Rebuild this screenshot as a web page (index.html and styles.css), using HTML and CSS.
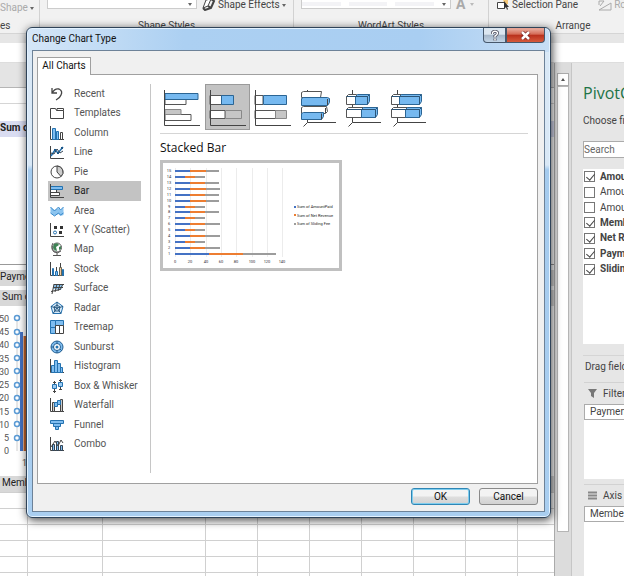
FILE: index.html
```html
<!DOCTYPE html>
<html lang="en">
<head>
  <meta charset="UTF-8" />
  <meta name="viewport" content="width=device-width, initial-scale=1.0"/>
  <title>Change Chart Type</title>
  <link rel="stylesheet" href="styles.css">
</head>
<body>
  <div class="app">
    <div class="ribbon">
      <div class="group group-insert">
        <div class="tools"><span class="dim">Shape <i class="caret"></i></span></div>
        <div class="group-name">es</div>
      </div>
      <div class="group group-shape">
        <div class="tools">
          <div class="gallery"><i class="caret"></i></div>
          <button class="tool">
            <svg width="14" height="12" viewBox="0 0 14 12"><path d="M4 1 9 0 6 7 1 9Z" fill="#fff" stroke="#444"/><path d="M1 9 3 11 9 9 12 2 9 0M6 7 9 9" fill="none" stroke="#444" stroke-width="2"/></svg>
            Shape Effects <i class="caret"></i>
          </button>
        </div>
        <div class="group-name">Shape Styles</div>
      </div>
      <div class="group group-wordart">
        <div class="tools">
          <div class="gallery wordart"><span></span><span></span><span></span><i class="caret"></i></div>
          <span class="dim letter">A</span><i class="caret light"></i>
        </div>
        <div class="group-name">WordArt Styles</div>
      </div>
      <div class="group group-arrange">
        <div class="tools">
          <button class="tool">
            <svg width="14" height="12" viewBox="0 0 14 12"><path d="M7 0h5v5H8z" fill="#f3c677"/><path d="M1.500 3.500h7v6h-7z" fill="#fff" stroke="#444"/><path d="M8 2v8l2-2 1 3 1-1-1-2h2z" fill="#333"/></svg>
            Selection Pane
          </button>
          <span class="dim rotate">
            <svg width="14" height="11" viewBox="0 0 14 11"><path d="M1 10h12V3zM1 5V1h5M6 1 2 6" fill="none" stroke="#aaa"/></svg>
            Ro
          </span>
        </div>
        <div class="group-name">Arrange</div>
      </div>
    </div>
    <div class="formula-bar"></div>

    <div class="workspace">
      <div class="sheet">
        <div class="sheet-head"></div>
        <div class="sheet-row"></div>
        <div class="band pivot">Sum o</div>
        <div class="sheet-blank"></div>
        <div class="band">Paymen</div>
        <div class="band second">Sum o</div>
        <svg class="axis" width="40" height="165" viewBox="0 0 40 165">
          <path d="M17 11v133" stroke="#d0d0d0"/>
          <path d="M21.500 25v119" stroke="#4472c4" stroke-width="3"/>
          <path d="M25 29v115" stroke="#c0622a" stroke-width="3"/>
          <g class="axis-text">
            <text x="9" y="15">50</text><text x="9" y="28">45</text><text x="9" y="41">40</text><text x="9" y="55">35</text><text x="9" y="68">30</text><text x="9" y="81">25</text><text x="9" y="94">20</text><text x="9" y="108">15</text><text x="9" y="121">10</text><text x="9" y="134">5</text><text x="9" y="147">0</text><text x="27" y="159">1</text>
          </g>
          <g fill="#fff" stroke="#5b9bd5" stroke-width="1.500">
            <circle cx="17" cy="11" r="2.500"/><circle cx="17" cy="25" r="2.500"/><circle cx="17" cy="38" r="2.500"/><circle cx="17" cy="51" r="2.500"/><circle cx="17" cy="64" r="2.500"/><circle cx="17" cy="78" r="2.500"/><circle cx="17" cy="91" r="2.500"/><circle cx="17" cy="104" r="2.500"/><circle cx="17" cy="117" r="2.500"/><circle cx="17" cy="131" r="2.500"/>
          </g>
        </svg>
        <div class="band second">Membe</div>
        <div class="cells"><span></span><span></span><span></span><span></span><span></span><span></span><span></span><span></span><span></span></div>
      </div>
      <div class="scrollbar"><div class="scroll-up"><i class="caret up"></i></div><div class="thumb"></div></div>
      <div class="pane">
        <h2>PivotC</h2>
        <p>Choose fi</p>
        <input class="search" type="text" placeholder="Search" aria-label="Search" />
        <div class="fields">
          <label class="on"><input type="checkbox" checked />Amou</label>
          <label><input type="checkbox" />Amou</label>
          <label><input type="checkbox" />Amou</label>
          <label class="on"><input type="checkbox" checked />Memb</label>
          <label class="on"><input type="checkbox" checked />Net R</label>
          <label class="on"><input type="checkbox" checked />Paym</label>
          <label class="on"><input type="checkbox" checked />Slidin</label>
        </div>
        <p class="drag">Drag field</p>
        <div class="area">
          <div class="area-name"><svg width="9" height="9" viewBox="0 0 9 9"><path d="M0 0h9L6 4v5L3 7V4z" fill="#777"/></svg>Filter</div>
          <div class="area-box"><div class="chip">Paymen</div></div>
        </div>
        <div class="area">
          <div class="area-name"><svg width="9" height="9" viewBox="0 0 9 9"><path d="M0 1.500h9M0 4.500h9M0 7.500h9" stroke="#888" stroke-width="2"/></svg>Axis</div>
          <div class="area-box"><div class="chip">Membe</div></div>
        </div>
      </div>
    </div>
  </div>

  <div class="dialog" role="dialog" aria-labelledby="dialog-title">
    <div class="titlebar">
      <span id="dialog-title">Change Chart Type</span>
      <div class="window-btns">
        <button class="help" aria-label="Help"><svg width="10" height="11" viewBox="0 0 10 11"><path d="M2.500 4V2.500Q5 0 7.500 2.500 8 4 5 6v1.500M5 8.500v2" fill="none" stroke="#445" stroke-width="3"/><path d="M2.500 4V2.500Q5 0 7.500 2.500 8 4 5 6v1.500M5 8.500v2" fill="none" stroke="#fff" stroke-width="1.500"/></svg></button>
        <button class="close" aria-label="Close"><svg width="11" height="9" viewBox="0 0 11 9"><path d="m2 1 7 7M9 1 2 8" stroke="#722" stroke-width="4"/><path d="m2 1 7 7M9 1 2 8" stroke="#fff" stroke-width="2.500"/></svg></button>
      </div>
    </div>
    <div class="dialog-body">
      <div class="tabs"><button class="tab">All Charts</button></div>
      <div class="panel">
        <div class="types">
          <button><svg class="ico" viewBox="0 0 14 14"><path d="M2 1v5h5M2 6Q5 1 9 2q4 2 2 6-1 3-5 5" fill="none" stroke="#444" stroke-width="1.300"/></svg>Recent</button>
          <button><svg class="ico" viewBox="0 0 14 14"><path d="M.5 12.500v-10h5l1 2h7v8zM7 4.500V2.500h6.500v2" fill="#fff" stroke="#444"/></svg>Templates</button>
          <button><svg class="ico" viewBox="0 0 14 14"><path d="M.5 0v13.500H14" fill="none" stroke="#444"/><path d="M2.500 2.500h3v11h-3zM6.500 5.500h2v8h-2z" fill="#7fbdf0" stroke="#2472b0"/><path d="M10.500 6.500h2v7h-2z" fill="#fff" stroke="#444"/></svg>Column</button>
          <button><svg class="ico" viewBox="0 0 14 14"><path d="M.5 1v12.500H14" fill="none" stroke="#444"/><path d="m1 11 4-6 3 3 5-6" fill="none" stroke="#2472b0" stroke-width="1.500"/><path d="m1 8 3 1 3-5 3 4 3-2" fill="none" stroke="#345"/><path d="M4 4h2v2H4zM7 7h2v2H7zM11 2h2v2h-2z" fill="#1b5687"/></svg>Line</button>
          <button><svg class="ico" viewBox="0 0 14 14"><circle cx="7" cy="7" r="6" fill="#fff" stroke="#444"/><path d="M7 7V1a6 6 0 0 1 4 10.500z" fill="#ccc" stroke="#444"/></svg>Pie</button>
          <button class="selected"><svg class="ico" viewBox="0 0 14 14"><path d="M.5 5.500h6v3h-6zM.5 8.500h9v3h-9z" fill="#fff" stroke="#444"/><path d="M.5 2.500h12v3H.5z" fill="#7fbdf0" stroke="#2472b0"/><path d="M.5 0v13.500H14" fill="none" stroke="#444"/></svg>Bar</button>
          <button><svg class="ico" viewBox="0 0 14 14"><path d="m.5 3 4 3 4-2 2 2 3-3v8l-3 1-2-2-4 2-4-3z" fill="#8cc4ef"/><path d="m.5 3 4 4 4-4 2 3 3-3M.5 9l4 3 4-3 2 2 3-2" fill="none" stroke="#3a8acb"/></svg>Area</button>
          <button><svg class="ico" viewBox="0 0 14 14"><path d="M.5 0v13.500H14" fill="none" stroke="#444"/><path d="M4 3h3v3H4zM10 3h3v3h-3zM9 8h3v3H9z" fill="#333"/><circle cx="5" cy="9.500" r="1.500" fill="#fff" stroke="#2472b0"/></svg>X Y (Scatter)</button>
          <button><svg class="ico" viewBox="0 0 14 14"><circle cx="7" cy="5.500" r="4.500" fill="#fff" stroke="#555"/><path d="M4 2q4-2 5 1l-3 2 1 4q-4-1-4-4zM9 5l2-1v3L9 8z" fill="#3f8355"/><path d="M3 1q-3 5 1 9 4 2 7-1M7 11v2.500M3 13.500h8" fill="none" stroke="#555"/></svg>Map</button>
          <button><svg class="ico" viewBox="0 0 14 14"><path d="M.5 0v13.500H14M6.500 5v8M10.500 1v6" fill="none" stroke="#444"/><path d="M2.500 6.500h1v7h-1zM5.500 9.500h2v4h-2zM12.500 7.500h1v6h-1z" fill="#7fbdf0" stroke="#2472b0"/><path d="M9.500 5.500h2v8h-2z" fill="#f3c99f" stroke="#665"/></svg>Stock</button>
          <button><svg class="ico" viewBox="0 0 14 14"><path d="m4 3 9 1-2 5-8-1z" fill="#8cc4ef"/><path d="M4 3 2 13M7 3l-2 8M10 3 8 10M13 3l-3 6M4 3.500h10M3 6.500h10M1 10.500l9-2" fill="none" stroke="#444"/></svg>Surface</button>
          <button><svg class="ico" viewBox="0 0 14 14"><path d="m7 1 6 4.500-2 7H3l-2-7z" fill="#dbedfb" stroke="#2472b0"/><path d="m7 4 3 2-1 4H5L4 6zM7 1v6M13 5.500 7 7l4 5.500M3 12.500 7 7 1 5.500" fill="none" stroke="#24567f"/></svg>Radar</button>
          <button><svg class="ico" viewBox="0 0 14 14"><path d="M.5.500h5v7h-5zM.5 7.500h5v6h-5z" fill="#7fbdf0" stroke="#2472b0"/><path d="M5.500.500h8v5h-8z" fill="#7fbdf0" stroke="#2472b0"/><path d="M5.500 5.500h4v8h-4zM9.500 5.500h4v8h-4z" fill="#fff" stroke="#444"/></svg>Treemap</button>
          <button><svg class="ico" viewBox="0 0 14 14"><circle cx="7" cy="7" r="6" fill="#7fbdf0" stroke="#245f91"/><circle cx="7" cy="7" r="3.500" fill="#fff" stroke="#245f91"/><circle cx="7" cy="7" r="1.500" fill="#2472b0"/><path d="M7 1v3M10 9l2 2M1 7h3M7 10v3" stroke="#245f91"/></svg>Sunburst</button>
          <button><svg class="ico" viewBox="0 0 14 14"><path d="M.5 0v13.500H14" fill="none" stroke="#444"/><path d="M1.500 6.500h3v7h-3zM4.500 1.500h3v12h-3zM7.500 4.500h3v9h-3zM10.500 8.500h2v5h-2z" fill="#7fbdf0" stroke="#2472b0"/></svg>Histogram</button>
          <button><svg class="ico" viewBox="0 0 14 14"><path d="M4.500 2v12M10.500 0v11M3 3.500h3M3 12.500h3M9 1.500h3M9 10.500h3" stroke="#444"/><path d="M2.500 5.500h4v4h-4zM8.500 3.500h4v4h-4z" fill="#9bcbf2" stroke="#2472b0"/></svg>Box &amp; Whisker</button>
          <button><svg class="ico" viewBox="0 0 14 14"><path d="M.5 0v13.500H14" fill="none" stroke="#444"/><path d="M2.500 4.500h2v9h-2zM10.500 1.500h2v12h-2z" fill="#ccc" stroke="#444"/><path d="M4.500 4.500h3v4h-3zM7.500 2.500h3v4h-3z" fill="#7fbdf0" stroke="#2472b0"/></svg>Waterfall</button>
          <button><svg class="ico" viewBox="0 0 14 14"><path d="M.5 2.500h13v3H.5zM3.500 5.500h7v3h-7zM5.500 8.500h3v3h-3z" fill="#7fbdf0" stroke="#2472b0"/></svg>Funnel</button>
          <button><svg class="ico" viewBox="0 0 14 14"><path d="M.5 0v13.500H14" fill="none" stroke="#444"/><path d="M2.500 7.500h2v6h-2zM6.500 4.500h2v9h-2zM10.500 8.500h2v5h-2z" fill="#7fbdf0" stroke="#345"/><path d="m1 10 4-6 3 5 3-6 2 3" fill="none" stroke="#444"/></svg>Combo</button>
        </div>
        <div class="detail">
          <div class="subtypes">
            <button aria-label="Clustered Bar"><svg viewBox="0 0 45 45"><path d="M5 14.500h21v5H5zM5 29.500h26v6H5z" class="white"/><path d="M5 8.500h33v6H5z" class="blue"/><path d="M5 24.500h16v5H5z" class="gray"/><path d="M4.500 5v35.500H40" class="line"/></svg></button>
            <button class="selected" aria-label="Stacked Bar"><svg viewBox="0 0 45 45"><path d="M5 10.500h12v9H5zM5 25.500h15v8H5z" class="white"/><path d="M16.500 10.500h12v9h-12z" class="blue"/><path d="M20.500 25.500h16v8h-16z" class="gray"/><path d="M5.500 5v35.500H41" class="line"/></svg></button>
            <button aria-label="100% Stacked Bar"><svg viewBox="0 0 45 45"><path d="M5 10.500h8v9H5zM5 25.500h21v8H5z" class="white"/><path d="M13.500 10.500h23v9h-23z" class="blue"/><path d="M25.500 25.500h11v8h-11z" class="gray"/><path d="M5.500 5v35.500H41" class="line"/></svg></button>
            <button aria-label="3-D Clustered Bar"><svg viewBox="0 0 45 45"><path d="M12.500 5v32.500H41M12.500 37.500l-4 4" class="line"/><path d="m6.500 7.500 2-1h18l-1 6h-19zM6.500 22.500l2-1h23l1 5-2 2h-24z" class="white"/><path d="m6.500 13.500 2-1h24l2 1v4l-2 3h-26zM6.500 28.500l2-1h20v4l-2 3h-20z" class="blue"/><path d="M32.500 14v6M26.500 28.500v6M30.500 23v5" class="line"/></svg></button>
            <button aria-label="3-D Stacked Bar"><svg viewBox="0 0 45 45"><path d="M12.500 5v32.500H41M12.500 37.500l-4 4" class="line"/><path d="m6.500 11.500 2-2h8v10h-10zM6.500 24.500l2-2h15v10h-17z" class="white"/><path d="m15.500 11.500 2-2h12v7l-2 3h-12zM21.500 24.500l2-2h14v7l-2 3h-14z" class="blue"/><path d="M6.500 11.500h21v8M27.500 11.500l2-2M6.500 24.500h29v8M35.500 24.500l2-2" class="edge"/></svg></button>
            <button aria-label="3-D 100% Stacked Bar"><svg viewBox="0 0 45 45"><path d="M12.500 5v32.500H41M12.500 37.500l-4 4" class="line"/><path d="m6.500 11.500 2-2h8v10h-10zM6.500 24.500l2-2h14v10h-16z" class="white"/><path d="m14.500 11.500 2-2h20v7l-2 3h-20zM20.500 24.500l2-2h14v7l-2 3h-14z" class="blue"/><path d="M6.500 11.500h28v8M34.500 11.500l2-2M6.500 24.500h28v8M34.500 24.500l2-2" class="edge"/></svg></button>
          </div>
          <h3>Stacked Bar</h3>
          <div class="preview">
            <svg width="176" height="105" viewBox="0 0 176 105">
              <path d="M12.500 5v89M27.500 5v89M43.500 5v89M58.500 5v89M73.500 5v89M89.500 5v89M104.500 5v89M119.500 5v89" stroke="#ececec"/>
              <g stroke-width="2">
                <path d="M12 8h44M12 14h30M12 20h44M12 26h45M12 32h44M12 38h44M12 44h30M12 49h44M12 55h30M12 61h45M12 67h30M12 73h45M12 79h30M12 85h45M12 91h101" stroke="#9c9c9c"/>
                <path d="M12 8h31M12 14h20M12 20h30M12 26h31M12 32h30M12 38h31M12 44h20M12 49h30M12 55h20M12 61h30M12 67h20M12 73h30M12 79h20M12 85h30M12 91h68" stroke="#ed7d31"/>
                <path d="M12 8h15M12 14h10M12 20h15M12 26h15M12 32h15M12 38h15M12 44h10M12 49h15M12 55h10M12 61h15M12 67h10M12 73h15M12 79h10M12 85h15M12 91h34" stroke="#4472c4"/>
              </g>
              <g class="ticks">
                <text x="6" y="9">15</text><text x="6" y="15">14</text><text x="6" y="21">13</text><text x="6" y="27">12</text><text x="6" y="33">11</text><text x="6" y="39">10</text><text x="6" y="45">9</text><text x="6" y="50">8</text><text x="6" y="56">7</text><text x="6" y="62">6</text><text x="6" y="68">5</text><text x="6" y="74">4</text><text x="6" y="80">3</text><text x="6" y="86">2</text><text x="6" y="92">1</text>
                <text x="12" y="100">0</text><text x="27" y="100">20</text><text x="43" y="100">40</text><text x="58" y="100">60</text><text x="73" y="100">80</text><text x="89" y="100">100</text><text x="104" y="100">120</text><text x="119" y="100">140</text>
              </g>
              <path d="M131 43h2v2h-2z" fill="#4472c4"/><path d="M131 51h2v2h-2z" fill="#ed7d31"/><path d="M131 60h2v2h-2z" fill="#9c9c9c"/>
              <g class="legend"><text x="134" y="45">Sum of AmountPaid</text><text x="134" y="54">Sum of Net Revenue</text><text x="134" y="62">Sum of Sliding Fee</text></g>
            </svg>
          </div>
        </div>
      </div>
      <div class="actions">
        <button class="btn default">OK</button>
        <button class="btn">Cancel</button>
      </div>
    </div>
  </div>
</body>
</html>
```

FILE: styles.css
```css
* {
  box-sizing: border-box;
}

body {
  margin: 0;
  height: 100vh;
  overflow: hidden;
  background: #e6e6e6;
  color: #444;
  font-family: Roboto, "Open Sans", sans-serif;
  font-size: 10px;
  line-height: 14px;
}

button, input {
  font: inherit;
  color: inherit;
}

button {
  padding: 0;
  border: none;
  background: none;
  white-space: nowrap;
}

h2, h3, p {
  margin: 0;
  font-weight: normal;
}

svg {
  flex: none;
}

.app {
  display: flex;
  flex-direction: column;
  height: 100%;
}

.caret {
  display: inline-block;
  flex: none;
  height: 3px;
  border: 2px solid transparent;
  border-top: 3px solid #666;
  border-bottom: none;
  vertical-align: middle;
}

.caret.light {
  border-top-color: #bbb;
}

.caret.up {
  border-top: none;
  border-bottom: 3px solid #555;
}

.dim {
  color: #aaa;
}

/* ribbon */
.ribbon {
  display: flex;
  height: 34px;
  background: #f1f1f1;
  border-bottom: 1px solid #d5d5d5;
  white-space: nowrap;
  overflow: hidden;
}

.group {
  display: flex;
  flex: none;
  flex-direction: column;
  border-right: 1px solid #d2d2d2;
}

.group-insert { width: 40px; }
.group-shape { width: 254px; }
.group-wordart { width: 195px; }
.group-arrange { flex: 1; border: none; }

.tools {
  display: flex;
  height: 20px;
  padding-left: 7px;
  gap: 5px;
}

.group-insert .tools {
  padding: 1px 0 0;
}

.group-name {
  text-align: center;
}

.group-insert .group-name { text-align: left; }
.group-arrange .group-name { padding-left: 31px; }

.tool {
  display: flex;
  align-items: center;
  gap: 2px;
  height: 10px;
}

.gallery {
  display: flex;
  justify-content: flex-end;
  align-items: center;
  width: 150px;
  height: 9px;
  padding-right: 4px;
  background: #fff;
  border: 1px solid #ccc;
  border-top: none;
}

.wordart {
  gap: 8px;
}

.wordart span {
  flex: 1;
  height: 4px;
  background: #f3f3f6;
}

.letter {
  font-size: 14px;
  font-weight: bold;
  line-height: 8px;
}

.tools > .caret {
  margin-top: 3px;
}

.rotate {
  display: flex;
  gap: 2px;
  padding-left: 15px;
  line-height: 9px;
}

.formula-bar {
  height: 20px;
  margin-top: 9px;
  background: #fff;
  border-bottom: 1px solid #ddd;
}

/* sheet behind the dialog */
.workspace {
  display: flex;
  flex: 1;
  min-height: 0;
}

.sheet {
  display: flex;
  flex-direction: column;
  flex: 1;
  background: #fff;
  border-right: 1px solid #aaa;
  overflow: hidden;
}

.sheet > * {
  flex: none;
}

.sheet-head {
  height: 25px;
  background: #e4e4e4;
  border-bottom: 1px solid #b5b5b5;
}

.sheet-row {
  height: 16px;
  margin-bottom: 17px;
  border-bottom: 1px solid #d5d5d5;
}

.band {
  height: 16px;
  background: #d8d8d8;
  color: #222;
}

.band.second {
  margin-top: 4px;
  padding-left: 2px;
}

.pivot {
  background: #d9dcf1;
  font-weight: bold;
}

.sheet-blank {
  height: 128px;
  margin-bottom: 5px;
  border-bottom: 1px solid #999;
}

.axis {
  margin-top: 1px;
}

.axis-text {
  fill: #555;
  font-size: 9px;
  text-anchor: end;
}

.sheet .cells {
  display: grid;
  grid-template-columns: 28px 75px 103px repeat(6, 52px);
  flex: 1;
  background: linear-gradient(#d0d0d0 1px, transparent 1px) 0 0 / 100% 16px;
}

.cells span {
  border-right: 1px solid #d0d0d0;
}

.scrollbar {
  display: flex;
  flex-direction: column;
  width: 16px;
  padding: 10px 2px 0 2px;
  background: #dcdcdc;
}

.scroll-up {
  display: flex;
  align-items: center;
  justify-content: center;
  height: 13px;
  background: #fff;
  border: 1px solid #aaa;
}

.thumb {
  flex: 1;
  margin-bottom: 44px;
  background: #fff;
  border: 1px solid #b5b5b5;
}

.pane {
  width: 53px;
  padding: 16px 0 0 11px;
  border-left: 1px solid #c6c6c6;
  white-space: nowrap;
  overflow: hidden;
}

.pane h2 {
  margin-bottom: 7px;
  color: #217346;
  font-family: "Open Sans", sans-serif;
  font-size: 16px;
  line-height: 28px;
}

.search {
  display: block;
  width: 100px;
  height: 17px;
  margin: 13px 0 11px;
  padding: 0;
  border: 1px solid #ababab;
  background: #fff;
}

.search::placeholder {
  color: #666;
}

.fields {
  display: grid;
  grid-template-rows: repeat(7, 1fr);
  height: 175px;
  padding-bottom: 67px;
  margin-bottom: 11px;
  background: #fff;
}

.fields label {
  display: flex;
  align-items: center;
  gap: 5px;
}

.on {
  font-weight: bold;
}

.fields input {
  appearance: none;
  flex: none;
  width: 11px;
  height: 11px;
  margin: 0 0 0 1px;
  border: 1px solid #777;
  background: #fff;
}

.fields input:checked::before {
  content: "";
  display: block;
  width: 4px;
  height: 7px;
  margin: 0 0 0 3px;
  border: solid #444;
  border-width: 0 1px 1px 0;
  transform: rotate(40deg);
}

.drag {
  padding: 4px 0 8px 2px;
  border-top: 1px solid #d5d5d5;
}

.area {
  margin: 0 0 5px 1px;
  border-top: 1px solid #d2d2d2;
}

.area-name {
  display: flex;
  align-items: center;
  gap: 6px;
  height: 21px;
  padding-left: 4px;
}

.area-box {
  height: 75px;
  background: #fff;
}

.chip {
  height: 16px;
  padding-left: 5px;
  border: 1px solid #ababab;
  border-right: none;
}

/* dialog */
.dialog {
  position: absolute;
  top: 27px;
  right: 73px;
  bottom: 58px;
  left: 26px;
  display: flex;
  flex-direction: column;
  padding: 0 5px 5px;
  border: 1px solid #2f4358;
  border-radius: 6px;
  background:
    linear-gradient(to right, #d5e6f7, #acd0f2 30%, #a9cef2 75%, #c7def5) top / 100% 24px no-repeat,
    linear-gradient(#d9e8f6 28%, #a5cbee 29%, #a9cef0);
  box-shadow: inset 0 0 0 1px #e3f2ff, 1px 2px 10px rgba(0, 0, 0, .75);
  color: #111;
}

.titlebar {
  display: flex;
  justify-content: space-between;
  height: 22px;
}

.titlebar span {
  padding-top: 4px;
}

.window-btns {
  display: flex;
  height: 15px;
}

.window-btns button {
  display: flex;
  align-items: center;
  justify-content: center;
  border: 1px solid #46586c;
  border-top: none;
}

.help {
  width: 23px;
  border-radius: 0 0 0 4px;
  background: linear-gradient(#dbe6f0 45%, #a5b6c8 50%, #c3d6e8);
}

.close {
  width: 39px;
  border-radius: 0 0 4px 0;
  background: linear-gradient(#e5a394 10%, #d46a55 45%, #b82f1c 50%, #d65a3c);
}

.dialog-body {
  display: flex;
  flex-direction: column;
  flex: 1;
  min-height: 0;
  padding: 6px 6px 6px 4px;
  border: 1px solid #6d8298;
  background: #f0f0f0;
}

.tab {
  position: relative;
  display: block;
  width: 54px;
  height: 18px;
  margin-bottom: -1px;
  padding-bottom: 2px;
  border: 1px solid #a0a0a0;
  border-bottom: none;
  background: #fff;
}

.panel {
  display: flex;
  flex: 1;
  min-height: 0;
  padding: 9px 9px 10px 10px;
  border: 1px solid #a0a0a0;
  background: #fff;
}

.types {
  display: flex;
  flex-direction: column;
  width: 103px;
  padding: 0 9px 19px 0;
  border-right: 1px solid #c6c6c6;
}

.types button {
  display: flex;
  flex: 1;
  align-items: center;
  gap: 10px;
  padding-left: 2px;
  color: #555;
}

.types .selected {
  background: #c3c3c3;
  color: #222;
}

.ico {
  width: 14px;
  height: 14px;
}

.detail {
  flex: 1;
  padding-left: 9px;
}

.subtypes {
  display: flex;
  padding-bottom: 3px;
  border-bottom: 1px solid #d5d5d5;
}

.subtypes button {
  width: 45px;
  height: 46px;
}

.subtypes .selected {
  background: #c3c3c3;
  outline: 1px solid #9a9a9a;
  outline-offset: -1px;
}

.subtypes svg {
  display: block;
  width: 45px;
  height: 45px;
}

.blue { fill: #76b9f0; stroke: #2b6594; }
.white { fill: #fff; stroke: #555; }
.gray { fill: #c6c6c6; stroke: #888; }
.line { fill: none; stroke: #444; }
.edge { fill: none; stroke: #2b5578; }

.detail h3 {
  padding: 5px 0 4px;
  font-family: "Open Sans", sans-serif;
  font-size: 12px;
  line-height: 17px;
}

.preview {
  width: 182px;
  border: 3px solid #c0c0c0;
}

.preview svg {
  display: block;
}

.ticks {
  fill: #333;
  font-size: 4px;
  text-anchor: middle;
}

.legend {
  fill: #222;
  font-size: 4px;
}

.actions {
  display: flex;
  justify-content: flex-end;
  gap: 9px;
  padding-top: 4px;
}

.btn {
  width: 59px;
  height: 17px;
  border: 1px solid #8a8a8a;
  border-radius: 3px;
  background: linear-gradient(#f3f3f3 45%, #dedede 55%, #d2d2d2);
}

.default {
  border-color: #2f86b5;
  box-shadow: inset 0 0 0 1px #7fcdee;
}
```
